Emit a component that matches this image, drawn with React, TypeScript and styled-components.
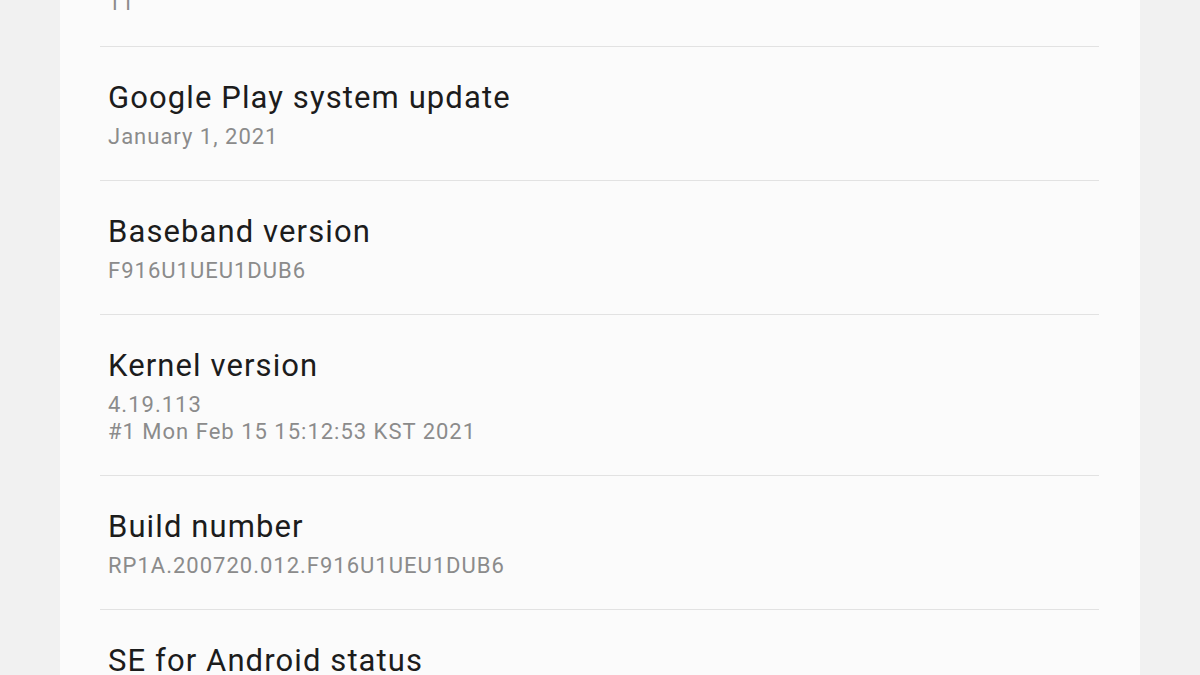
import styled, { createGlobalStyle } from 'styled-components';

type AboutItem = {
  title: string;
  values: Array<string>;
};

const ITEMS: Array<AboutItem> = [
  { title: 'Android version', values: ['11'] },
  { title: 'Google Play system update', values: ['January 1, 2021'] },
  { title: 'Baseband version', values: ['F916U1UEU1DUB6'] },
  {
    title: 'Kernel version',
    values: ['4.19.113', '#1 Mon Feb 15 15:12:53 KST 2021'],
  },
  { title: 'Build number', values: ['RP1A.200720.012.F916U1UEU1DUB6'] },
  { title: 'SE for Android status', values: ['Enforcing'] },
];

function App() {
  return (
    <>
      <GlobalStyle />
      <StyledScreen>
        <StyledCard>
          <StyledList>
            {ITEMS.map(({ title, values }) => (
              <StyledRow key={title}>
                <StyledTitle>{title}</StyledTitle>
                {values.map(value => (
                  <StyledValue key={value}>{value}</StyledValue>
                ))}
              </StyledRow>
            ))}
          </StyledList>
        </StyledCard>
      </StyledScreen>
    </>
  );
}

const GlobalStyle = createGlobalStyle`
  html, body {
    margin: 0;
    padding: 0;
    background: #f1f1f1;
  }

  body {
    font-family: Roboto, "Noto Sans", sans-serif;
    -webkit-font-smoothing: antialiased;
  }
`;

const StyledScreen = styled.div`
  display: flex;
  justify-content: center;

  height: 675px;
  overflow: hidden;

  background: #f1f1f1;
`;

const StyledCard = styled.div`
  width: 1080px;
  height: 100%;
  padding: 0 41px 0 40px;
  box-sizing: border-box;

  background: #fbfbfb;
`;

// list is scrolled so that only the value of the first row shows
const StyledList = styled.div`
  margin-top: -87px;
`;

const StyledRow = styled.div`
  display: flex;
  flex-direction: column;

  padding: 33px 8px 30px;
  border-bottom: 1px solid #e2e2e2;
`;

const StyledTitle = styled.div`
  margin-bottom: 7px;

  font-size: 31px;
  line-height: 36px;
  letter-spacing: 1.1px;
  color: #1c1c1c;
`;

const StyledValue = styled.div`
  font-size: 22px;
  line-height: 27px;
  letter-spacing: 1px;
  color: #8b8b8b;
`;

export default App;
